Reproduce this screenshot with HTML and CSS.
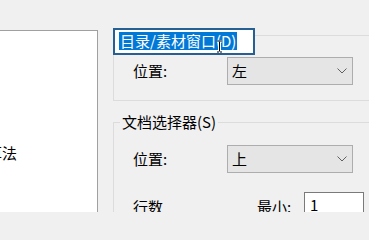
FILE: index.html
```html
<!DOCTYPE html>
<html lang="zh-CN">
<head>
<meta charset="utf-8">
<link rel="stylesheet" href="styles.css">
</head>
<body>
<div class="root">
  <div class="left">
    <div class="tree-item"><span class="cut">算法</span></div>
  </div>
  <div class="right">
    <div class="group g1">
      <div class="title-edit">
        <span class="sel">目录/素材窗口(D)</span>
        <svg class="ibeam" width="7" height="13" viewBox="0 0 7 13">
          <path d="M1 1h2M4 1h2M3.5 1.5v10M1 12h2M4 12h2" stroke="#fff" stroke-width="3" fill="none"/>
          <path d="M1 1h2M4 1h2M3.5 1.5v10M1 12h2M4 12h2" stroke="#000" stroke-width="1" fill="none"/>
        </svg>
      </div>
      <div class="row">
        <span class="lbl">位置:</span>
        <div class="combo"><span>左</span><svg class="chev" width="10" height="6" viewBox="0 0 10 6"><polyline points="0.5,0.5 5,5 9.5,0.5" fill="none" stroke="#606060" stroke-width="1"/></svg></div>
      </div>
    </div>
    <fieldset class="group g2">
      <legend>文档选择器(S)</legend>
      <div class="gbody">
        <div class="row">
          <span class="lbl">位置:</span>
          <div class="combo"><span>上</span><svg class="chev" width="10" height="6" viewBox="0 0 10 6"><polyline points="0.5,0.5 5,5 9.5,0.5" fill="none" stroke="#606060" stroke-width="1"/></svg></div>
        </div>
        <div class="row r3">
          <span class="lbl lbl-rows">行数</span>
          <span class="lbl lbl-min">最小:</span>
          <div class="num">1</div>
        </div>
      </div>
    </fieldset>
  </div>
</div>
</body>
</html>
```
FILE: styles.css
```css
html, body {
  margin: 0;
  height: 212px;
  overflow: hidden;
}
body {
  background: #f0f0f0;
  font: 15px/20px "Noto Sans CJK SC", "Noto Sans", sans-serif;
  color: #000;
}
.root {
  display: flex;
  height: 212px;
  overflow: hidden;
}
.left {
  width: 97px;
  flex: none;
  margin-top: 30px;
  border-top: 1px solid #a0a0a0;
  border-right: 1px solid #a0a0a0;
  background: #fff;
  padding-top: 112px;
  overflow: hidden;
}
.tree-item {
  white-space: nowrap;
}
.cut {
  display: inline-block;
  margin-left: -13px;
}
.right {
  flex: 1;
  min-width: 0;
  height: 212px;
  box-sizing: border-box;
  padding: 35px 0 0 15px;
  overflow: hidden;
}
.inner-wide {
  width: 300px;
}
.group {
  border: 1px solid #dcdcdc;
  position: relative;
  width: 290px;
  box-sizing: border-box;
}
.g1 {
  padding: 21px 0 15px 19px;
}
.title-edit {
  position: absolute;
  top: -8px;
  left: -1px;
  width: 142px;
  height: 27px;
  box-sizing: border-box;
  border: 2px solid #255f94;
  background: #fff;
  padding: 2px 0 0 4px;
}
.sel {
  display: inline-block;
  height: 18px;
  line-height: 18px;
  background: #0078d7;
  color: #fff;
  padding: 0 1px;
  white-space: nowrap;
  vertical-align: top;
}
.ibeam {
  position: absolute;
  left: 101px;
  top: 10px;
}
.row {
  display: flex;
  align-items: center;
  height: 28px;
}
.lbl {
  width: 94px;
  flex: none;
}
.combo {
  width: 126px;
  height: 28px;
  flex: none;
  box-sizing: border-box;
  border: 1px solid #adadad;
  background: #e5e5e5;
  display: flex;
  align-items: center;
  justify-content: space-between;
  padding: 0 5px 0 4px;
}
.chev {
  display: block;
}
.g2 {
  margin: 11px 0 0 0;
  padding: 0;
  min-width: 0;
  height: 120px;
}
.g2 legend {
  margin-left: 6px;
  padding: 0 2px;
}
.gbody {
  padding: 13px 0 0 19px;
}
.r3 {
  align-items: flex-start;
  height: auto;
  margin-top: 19px;
}
.r3 .lbl {
  margin-top: 5px;
}
.lbl-rows {
  width: 124px;
}
.lbl-min {
  width: 47px;
}
.num {
  width: 60px;
  height: 26px;
  flex: none;
  box-sizing: border-box;
  border: 1px solid #7a7a7a;
  background: #fff;
  padding: 2px 0 0 5px;
}
```
